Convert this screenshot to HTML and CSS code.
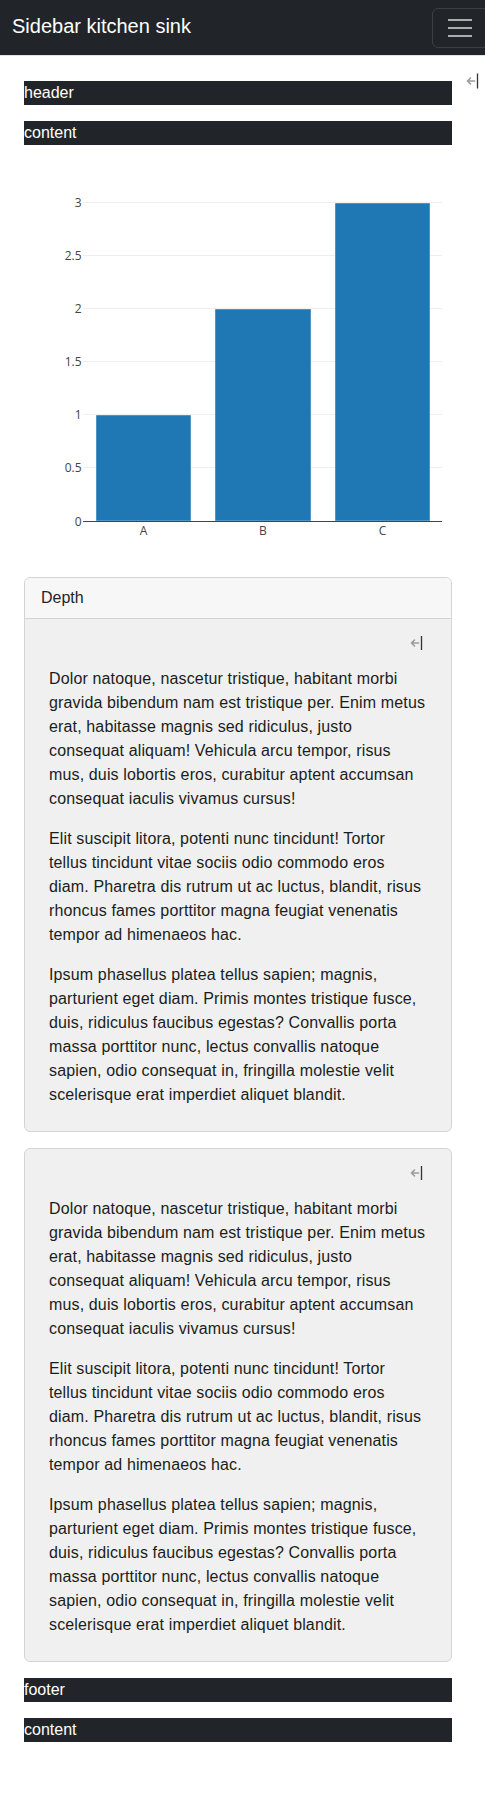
FILE: index.html
```html
<!DOCTYPE html>
<html>
<head>
<meta charset="utf-8">
<link rel="stylesheet" href="styles.css">
</head>
<body>
<nav class="navbar">
  <span class="brand">Sidebar kitchen sink</span>
  <button class="toggler" aria-label="menu"><span></span><span></span><span></span></button>
</nav>
<div class="layout">
  <button class="collapse-toggle top-toggle" aria-label="collapse">
    <svg width="14" height="16" viewBox="0 0 14 16"><path d="M1.5 8 H8.5 M1.5 8 L4.5 5 M1.5 8 L4.5 11" stroke="#9a9a9a" stroke-width="1.6" fill="none" stroke-linecap="round"/><path d="M11.5 0.5 V15.5" stroke="#333" stroke-width="1.3"/></svg>
  </button>
  <main class="main">
    <div class="bar">header</div>
    <div class="bar">content</div>
    <div class="chart">
      <svg width="428" height="400" viewBox="0 0 428 400">
        <g stroke="#eeeeee" stroke-width="1">
          <line x1="59" x2="418" y1="41.5" y2="41.5"/>
          <line x1="59" x2="418" y1="94.5" y2="94.5"/>
          <line x1="59" x2="418" y1="147.5" y2="147.5"/>
          <line x1="59" x2="418" y1="200.5" y2="200.5"/>
          <line x1="59" x2="418" y1="253.5" y2="253.5"/>
          <line x1="59" x2="418" y1="306.5" y2="306.5"/>
        </g>
        <g fill="#1f77b4" stroke="rgba(255,255,255,0.55)" stroke-width="0.8">
          <rect x="72" y="254" width="95" height="106"/>
          <rect x="191" y="148" width="96" height="212"/>
          <rect x="311" y="42" width="95" height="318"/>
        </g>
        <line x1="59" x2="418" y1="360.5" y2="360.5" stroke="#444" stroke-width="1"/>
        <g class="tick" text-anchor="end">
          <text x="57.5" y="45.5">3</text>
          <text x="57.5" y="98.5">2.5</text>
          <text x="57.5" y="151.5">2</text>
          <text x="57.5" y="204.5">1.5</text>
          <text x="57.5" y="257.5">1</text>
          <text x="57.5" y="310.5">0.5</text>
          <text x="57.5" y="364.5">0</text>
        </g>
        <g class="tick" text-anchor="middle">
          <text x="119.5" y="373.5">A</text>
          <text x="239" y="373.5">B</text>
          <text x="358.5" y="373.5">C</text>
        </g>
      </svg>
    </div>

    <div class="card">
      <div class="card-header">Depth</div>
      <div class="card-body">
        <button class="collapse-toggle card-toggle" aria-label="collapse">
          <svg width="14" height="16" viewBox="0 0 14 16"><path d="M1.5 8 H8.5 M1.5 8 L4.5 5 M1.5 8 L4.5 11" stroke="#9a9a9a" stroke-width="1.6" fill="none" stroke-linecap="round"/><path d="M11.5 1 V15" stroke="#333" stroke-width="1.3"/></svg>
        </button>
        <div class="card-text">
          <p>Dolor natoque, nascetur tristique, habitant morbi gravida bibendum nam est tristique per. Enim metus erat, habitasse magnis sed ridiculus, justo consequat aliquam! Vehicula arcu tempor, risus mus, duis lobortis eros, curabitur aptent accumsan consequat iaculis vivamus cursus!</p>
          <p>Elit suscipit litora, potenti nunc tincidunt! Tortor tellus tincidunt vitae sociis odio commodo eros diam. Pharetra dis rutrum ut ac luctus, blandit, risus rhoncus fames porttitor magna feugiat venenatis tempor ad himenaeos hac.</p>
          <p>Ipsum phasellus platea tellus sapien; magnis, parturient eget diam. Primis montes tristique fusce, duis, ridiculus faucibus egestas? Convallis porta massa porttitor nunc, lectus convallis natoque sapien, odio consequat in, fringilla molestie velit scelerisque erat imperdiet aliquet blandit.</p>
        </div>
      </div>
    </div>

    <div class="card">
      <div class="card-body">
        <button class="collapse-toggle card-toggle" aria-label="collapse">
          <svg width="14" height="16" viewBox="0 0 14 16"><path d="M1.5 8 H8.5 M1.5 8 L4.5 5 M1.5 8 L4.5 11" stroke="#9a9a9a" stroke-width="1.6" fill="none" stroke-linecap="round"/><path d="M11.5 1 V15" stroke="#333" stroke-width="1.3"/></svg>
        </button>
        <div class="card-text">
          <p>Dolor natoque, nascetur tristique, habitant morbi gravida bibendum nam est tristique per. Enim metus erat, habitasse magnis sed ridiculus, justo consequat aliquam! Vehicula arcu tempor, risus mus, duis lobortis eros, curabitur aptent accumsan consequat iaculis vivamus cursus!</p>
          <p>Elit suscipit litora, potenti nunc tincidunt! Tortor tellus tincidunt vitae sociis odio commodo eros diam. Pharetra dis rutrum ut ac luctus, blandit, risus rhoncus fames porttitor magna feugiat venenatis tempor ad himenaeos hac.</p>
          <p>Ipsum phasellus platea tellus sapien; magnis, parturient eget diam. Primis montes tristique fusce, duis, ridiculus faucibus egestas? Convallis porta massa porttitor nunc, lectus convallis natoque sapien, odio consequat in, fringilla molestie velit scelerisque erat imperdiet aliquet blandit.</p>
        </div>
      </div>
    </div>

    <div class="bar">footer</div>
    <div class="bar">content</div>
  </main>
</div>
</body>
</html>
```

FILE: styles.css
```css
* { box-sizing: border-box; }
html, body { margin: 0; padding: 0; }
body {
  font-family: "Liberation Sans", Arial, sans-serif;
  font-size: 16px;
  line-height: 1.5;
  color: #212529;
  background: #fff;
  overflow-x: hidden;
}
.navbar {
  height: 56px;
  background: #212529;
  border-bottom: 1px solid #dee2e6;
  display: flex;
  align-items: center;
  padding: 0 12px;
  position: relative;
  overflow: hidden;
}
.brand {
  color: #fff;
  font-size: 20px;
  line-height: 30px;
  margin-top: -4px;
}
.toggler {
  position: absolute;
  left: 432px;
  top: 8px;
  width: 58px;
  height: 40px;
  background: transparent;
  border: 1px solid rgba(255,255,255,0.12);
  border-radius: 6px;
  padding: 0 0 0 15px;
  display: flex;
  flex-direction: column;
  justify-content: center;
  gap: 6px;
}
.toggler span {
  display: block;
  width: 24px;
  height: 2px;
  background: rgba(255,255,255,0.62);
}
.layout { position: relative; }
.collapse-toggle {
  position: absolute;
  background: none;
  border: 0;
  padding: 0;
  width: 14px;
  height: 16px;
  line-height: 0;
}
.top-toggle { top: 17px; right: 5px; }
.main {
  padding: 25px 33px 40px 24px;
  display: flex;
  flex-direction: column;
  gap: 16px;
}
.bar {
  background: #212529;
  color: #fff;
  height: 24px;
  line-height: 24px;
  font-size: 16px;
}
.chart { height: 400px; }
.chart svg { display: block; }
.tick {
  font-family: "Open Sans", "DejaVu Sans", sans-serif;
  font-size: 12px;
  fill: #444;
}
.card {
  border: 1px solid #d3d4d5;
  border-radius: 6px;
  overflow: hidden;
  background: #f0f0f0;
}
.card-header {
  background: #f7f7f7;
  border-bottom: 1px solid #d3d4d5;
  padding: 8px 16px;
  height: 41px;
}
.card-body { position: relative; }
.card-toggle { top: 16px; right: 27px; }
.card-text {
  padding: 48px 24px 24px 24px;
  letter-spacing: 0.14px;
  color: #1a1d20;
}
.card-text p { margin: 0 0 16px 0; }
.card-text p:last-child { margin-bottom: 0; }
```
